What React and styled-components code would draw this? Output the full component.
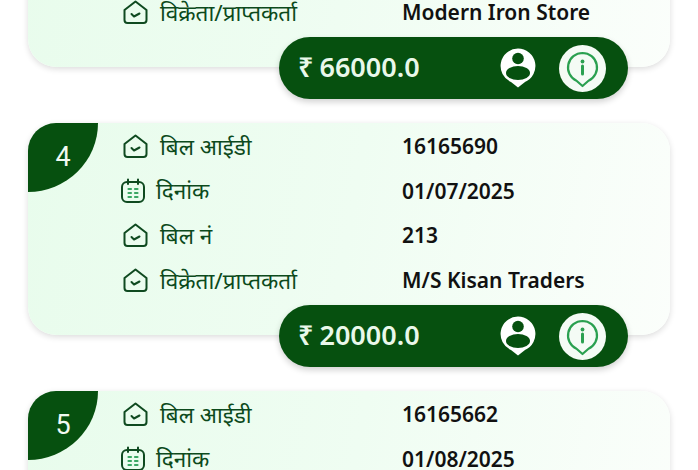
import styled, { createGlobalStyle } from 'styled-components';

const GlobalStyle = createGlobalStyle`
    html, body {
        margin: 0;
        padding: 0;
        background: #fff;
        height: 100%;
    }
    body {
        font-family: "Noto Sans", "Open Sans", sans-serif;
    }
`;

const Page = styled.div`
    width: 698px;
    height: 470px;
    overflow: hidden;
    background: #fff;
`;

const List = styled.div`
    display: flex;
    flex-direction: column;
    gap: 56px;
    margin-top: -145px;
    padding: 0 28px;
`;

const Card = styled.div`
    position: relative;
    height: 212px;
    box-sizing: border-box;
    padding: 1px 0 0 92px;
    border-radius: 28px;
    background: linear-gradient(100deg, #e8fcec 0%, #effdf2 50%, #fbfefb 100%);
    box-shadow: 0 2px 6px rgba(0, 0, 0, 0.14);
`;

const Badge = styled.div`
    position: absolute;
    left: 0;
    top: 0;
    width: 70px;
    height: 69px;
    box-sizing: border-box;
    display: flex;
    align-items: center;
    justify-content: center;
    padding-bottom: 2px;
    color: #f2faf2;
    font-family: Roboto, sans-serif;
    font-size: 27px;
    background: #06500f;
    border-top-left-radius: 28px;
    border-bottom-right-radius: 100%;
`;

const Row = styled.div`
    display: grid;
    grid-template-columns: 282px 1fr;
    align-items: center;
    height: 44.6px;
`;

const Label = styled.div`
    display: flex;
    align-items: center;
    gap: ${(p) => p.$gap}px;
    margin-left: ${(p) => p.$shift}px;
    color: #0c4a1c;
    font-size: 22.5px;
`;

const Value = styled.div`
    color: #111;
    font-size: 21px;
    font-weight: 600;
`;

const Pill = styled.div`
    position: absolute;
    right: 42px;
    top: 182px;
    width: 349px;
    height: 62px;
    box-sizing: border-box;
    display: flex;
    align-items: center;
    padding: 0 22px 0 19px;
    border-radius: 31px;
    background: #06500f;
    box-shadow: 0 3px 6px rgba(0, 0, 0, 0.18);
`;

const Amount = styled.div`
    flex: 1;
    padding-bottom: 4px;
    color: #e9f8ea;
    font-size: 27px;
    font-weight: 600;
    word-spacing: -1px;
`;

const PillIcons = styled.div`
    display: flex;
    align-items: center;
    gap: 23px;
`;

const HomeIcon = () => (
    <svg width="25" height="25" viewBox="0 0 25 25" fill="none" stroke="#0f4a20" strokeWidth="2" strokeLinecap="round" strokeLinejoin="round">
        <path d="M1.5 10 L12.5 1.5 L23.5 10 V20 A3 3 0 0 1 20.5 23 H4.5 A3 3 0 0 1 1.5 20 Z" />
        <path d="M8.5 14 L11 16.5 L16.5 13.5" />
    </svg>
);

const CalendarIcon = () => (
    <svg width="26" height="26" viewBox="0 0 26 26" fill="none" stroke="#0f4a20" strokeWidth="2" strokeLinecap="round">
        <rect x="2" y="4" width="22" height="20" rx="5" />
        <path d="M8 1.5 V6 M18 1.5 V6" />
        <path d="M8.5 11 H11 M15 11 H17.5 M8.5 15 H11 M15 15 H17.5 M8.5 19 H11 M15 19 H17.5" stroke="#3aa763" strokeWidth="2.2" />
    </svg>
);

const PersonPin = () => (
    <svg width="36" height="40" viewBox="0 0 36 40">
        <path d="M18 0.5 A17.5 17.5 0 0 1 25 34 L18 39.5 L11 34 A17.5 17.5 0 0 1 18 0.5 Z" fill="#fff" />
        <circle cx="18" cy="10.5" r="5.8" fill="#06500f" />
        <ellipse cx="18" cy="25" rx="12" ry="7" fill="#06500f" />
    </svg>
);

const InfoPin = () => (
    <svg width="47" height="47" viewBox="0 0 47 47">
        <circle cx="23.5" cy="23.5" r="23.5" fill="#f4fbf5" />
        <path d="M23.5 8 A14.5 14.5 0 0 1 29.5 35.7 L23.5 41 L17.5 35.7 A14.5 14.5 0 0 1 23.5 8 Z" fill="none" stroke="#2aa050" strokeWidth="2.2" strokeLinejoin="round" />
        <circle cx="23.5" cy="16.5" r="1.9" fill="#2aa050" />
        <path d="M23.5 21 V29" stroke="#2aa050" strokeWidth="3" strokeLinecap="round" />
    </svg>
);

const labels = [
    { text: 'बिल आईडी', Icon: HomeIcon, gap: 12, shift: 3 },
    { text: 'दिनांक', Icon: CalendarIcon, gap: 10, shift: 0 },
    { text: 'बिल नं', Icon: HomeIcon, gap: 12, shift: 3 },
    { text: 'विक्रेता/प्राप्तकर्ता', Icon: HomeIcon, gap: 12, shift: 3 },
];

const bills = [
    { no: 3, values: ['16165700', '01/06/2025', '190', 'Modern Iron Store'], amount: '66000.0' },
    { no: 4, values: ['16165690', '01/07/2025', '213', 'M/S Kisan Traders'], amount: '20000.0' },
    { no: 5, values: ['16165662', '01/08/2025', '198', 'Modern Iron Store'], amount: '45000.0' },
];

const App = () => {
    return (
        <Page>
            <GlobalStyle />
            <List>
                {bills.map((bill) => (
                    <Card key={bill.no}>
                        <Badge>{bill.no}</Badge>
                        {labels.map(({ text, Icon, gap, shift }, i) => (
                            <Row key={text}>
                                <Label $gap={gap} $shift={shift}>
                                    <Icon />
                                    {text}
                                </Label>
                                <Value>{bill.values[i]}</Value>
                            </Row>
                        ))}
                        <Pill>
                            <Amount>₹ {bill.amount}</Amount>
                            <PillIcons>
                                <PersonPin />
                                <InfoPin />
                            </PillIcons>
                        </Pill>
                    </Card>
                ))}
            </List>
        </Page>
    );
};

export default App;
